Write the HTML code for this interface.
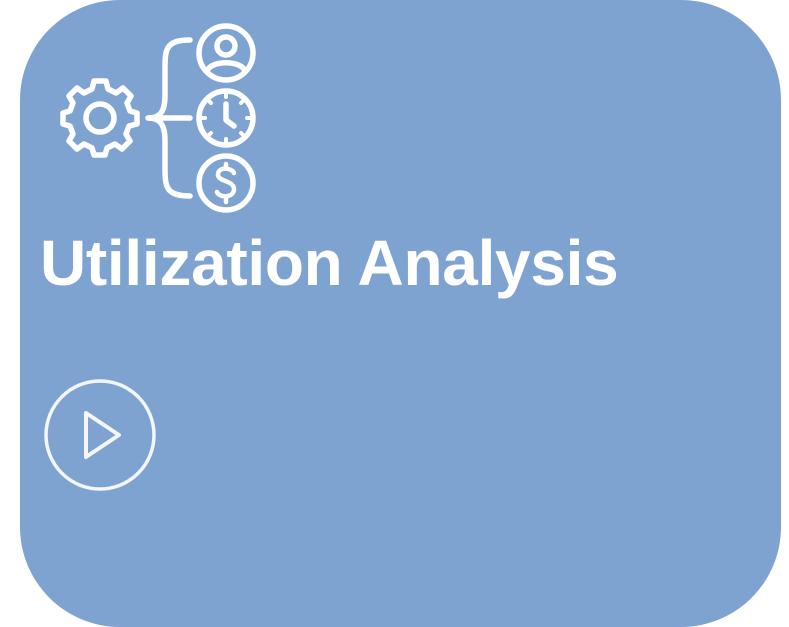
<!DOCTYPE html>
<html><head><meta charset="utf-8"><style>
html,body{margin:0;padding:0;width:789px;height:627px;background:#fff;overflow:hidden}
.card{position:absolute;left:20px;top:0;width:761px;height:627px;background:#7fa3d1;border-radius:100px}
.t{position:absolute;left:40px;top:226px;font:bold 64px "Liberation Sans",sans-serif;color:#fff;white-space:nowrap;letter-spacing:-0.3px}
svg{position:absolute;left:0;top:0}
</style></head><body>
<div class="card"></div>
<svg width="789" height="627" fill="none" stroke="#fff" stroke-width="5.5" stroke-linecap="round" stroke-linejoin="round">
<g transform="translate(100,118)">
<circle r="14"/>
<path d="M-6,-35 L6,-35 L8,-27 L16,-23 L23,-28 L31,-20 L27,-13 L30,-5 L37,-3 L37,8 L29,10 L26,18 L30,25 L22,33 L15,28 L7,32 L5,39 L-6,39 L-8,32 L-16,28 L-23,33 L-31,25 L-27,18 L-30,10 L-37,8 L-37,-3 L-30,-5 L-27,-13 L-31,-20 L-23,-28 L-16,-23 L-8,-27 Z" transform="translate(0,-2)"/>
</g>
<path d="M190,40 C165,40 165,50 165,70 L165,95 C165,112 160,118 148,118 C160,118 165,124 165,141 L165,166 C165,186 165,196 190,196"/>
<path d="M150,118 L190,118"/>
<circle cx="226" cy="53" r="27"/>
<circle cx="226" cy="46" r="9"/>
<path d="M207,71 C211,60 241,60 245,71"/>
<circle cx="226" cy="118" r="27"/>
<path d="M226,104 L226,120 L234,126"/>
<path d="M226,93 L226,97 M226,139 L226,143 M201,118 L205,118 M247,118 L251,118 M209,101 L211,103 M243,101 L241,103 M209,135 L211,133 M243,135 L241,133" stroke-width="4"/>
<circle cx="226" cy="183" r="27"/>
<path d="M234,173 C232,168 219,166 218,174 C217,182 235,180 234,190 C233,198 219,198 217,192 M226,164 L226,168 M226,198 L226,202" stroke-width="4.5"/>
<circle cx="100" cy="435" r="54" stroke-width="3.5" stroke="#f3f6fb"/>
<path d="M86,413 L119,435 L86,457 Z" stroke-width="4" stroke="#f3f6fb"/>
</svg>
<div class="t">Utilization Analysis</div>
</body></html>
